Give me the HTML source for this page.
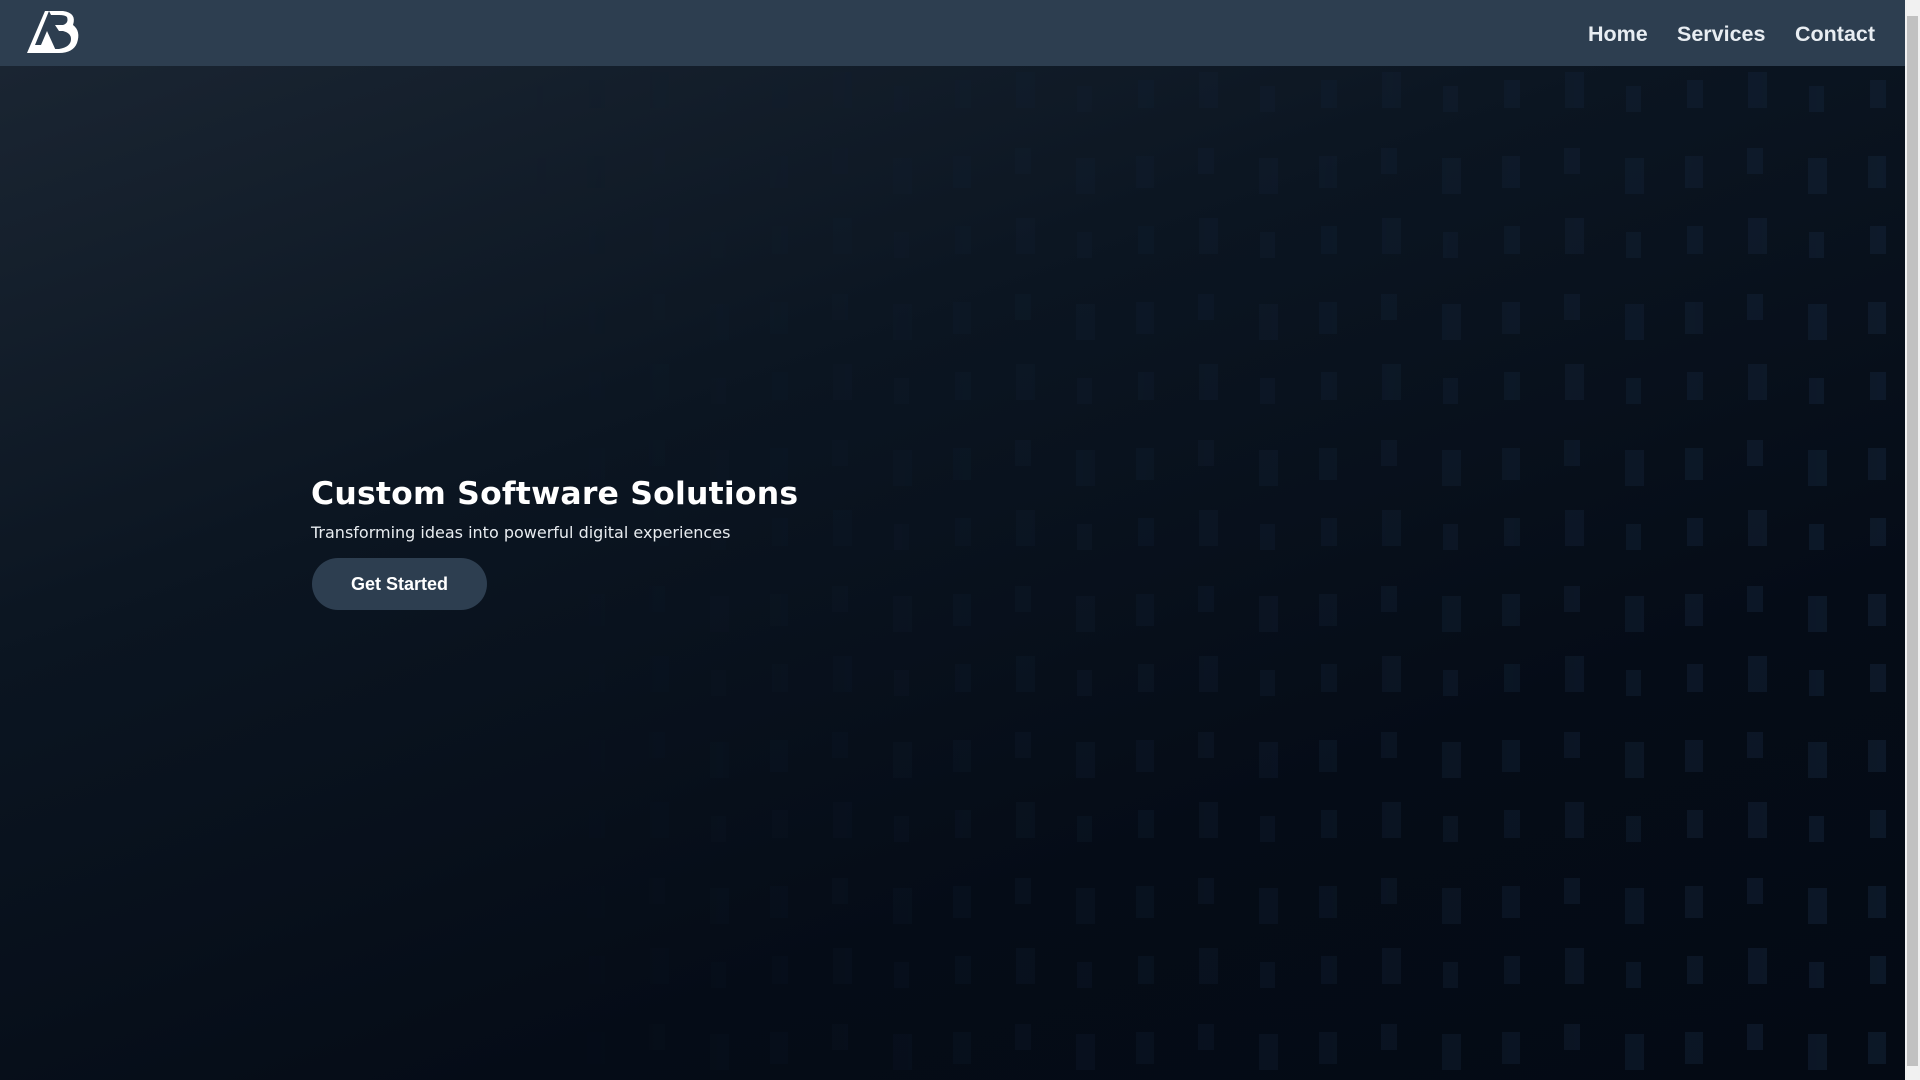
<!DOCTYPE html>
<html><head><meta charset="utf-8"><style>
*{margin:0;padding:0;box-sizing:border-box}
html,body{width:1920px;height:1080px;overflow:hidden;background:#060d18}
.nav{position:absolute;left:0;top:0;width:1905px;height:66px;background:#2d3e50;z-index:5}
.nav a{position:absolute;top:22px;font:bold 21.5px "Liberation Sans",sans-serif;color:#e8edf2;text-decoration:none}
.hero{position:absolute;left:0;top:66px;width:1905px;height:1014px;background:linear-gradient(160deg,#1a2532 0%,#0b1521 35%,#050c17 70%,#040a14 100%)}
.sb{position:absolute;right:0;top:0;width:15px;height:1080px;background:#f1f1f1}
.sb div{position:absolute;left:2px;top:16px;width:11px;height:1050px;background:#c1c1c1}
h1{position:absolute;left:311px;top:476px;font:bold 31.5px "DejaVu Sans",sans-serif;color:#fff;letter-spacing:0.2px}
p{position:absolute;left:311px;top:523px;font:16px "DejaVu Sans",sans-serif;color:#e8ecf0}
.btn{position:absolute;left:312px;top:558px;width:175px;height:52px;border-radius:26px;background:#2d3e50;color:#fff;font:bold 18px "Liberation Sans",sans-serif;text-align:center;line-height:52px}
</style></head><body>
<div class="hero">
<svg width="1905" height="1014" style="position:absolute;left:0;top:0">
<defs>
<pattern id="w" x="0" y="0" width="183" height="146" patternUnits="userSpaceOnUse">
<rect x="40" y="14" width="16" height="28" fill="#122033"/>
<rect x="101" y="6" width="19" height="36" fill="#122033"/>
<rect x="162" y="20" width="15" height="26" fill="#122033"/>
<rect x="38" y="90" width="18" height="32" fill="#122033"/>
<rect x="100" y="82" width="16" height="26" fill="#122033"/>
<rect x="161" y="92" width="19" height="36" fill="#122033"/>
</pattern>
<linearGradient id="g" x1="0" x2="1" y1="0" y2="0">
<stop offset="0.25" stop-color="#fff" stop-opacity="0"/>
<stop offset="0.55" stop-color="#fff" stop-opacity="0.35"/>
<stop offset="1" stop-color="#fff" stop-opacity="0.85"/>
</linearGradient>
<mask id="m"><rect width="1905" height="1014" fill="url(#g)"/></mask>
</defs>
<rect width="1905" height="1014" fill="url(#w)" mask="url(#m)" opacity="0.75"/>
</svg>
</div>
<div class="nav">
<svg width="60" height="48" viewBox="0 0 60 48" style="position:absolute;left:25px;top:9px">
<path d="M2 44 L20 2 L24 2 L10 36 L16 36 L22 22 L32 44 Z" fill="#fff"/>
<path d="M24 2 L38 2 Q52 4 48 16 Q56 22 52 34 Q48 44 34 44 L12 44 L14 40 L34 40 Q46 38 46 30 Q46 24 38 22 L34 22 L30 16 L38 16 Q44 14 42 8 Q40 6 34 6 L26 6 Z" fill="#fff"/>
</svg>
<a style="left:1588px">Home</a>
<a style="left:1677px">Services</a>
<a style="left:1795px">Contact</a>
</div>
<h1>Custom Software Solutions</h1>
<p>Transforming ideas into powerful digital experiences</p>
<div class="btn">Get Started</div>
<div class="sb"><div></div></div>
</body></html>
